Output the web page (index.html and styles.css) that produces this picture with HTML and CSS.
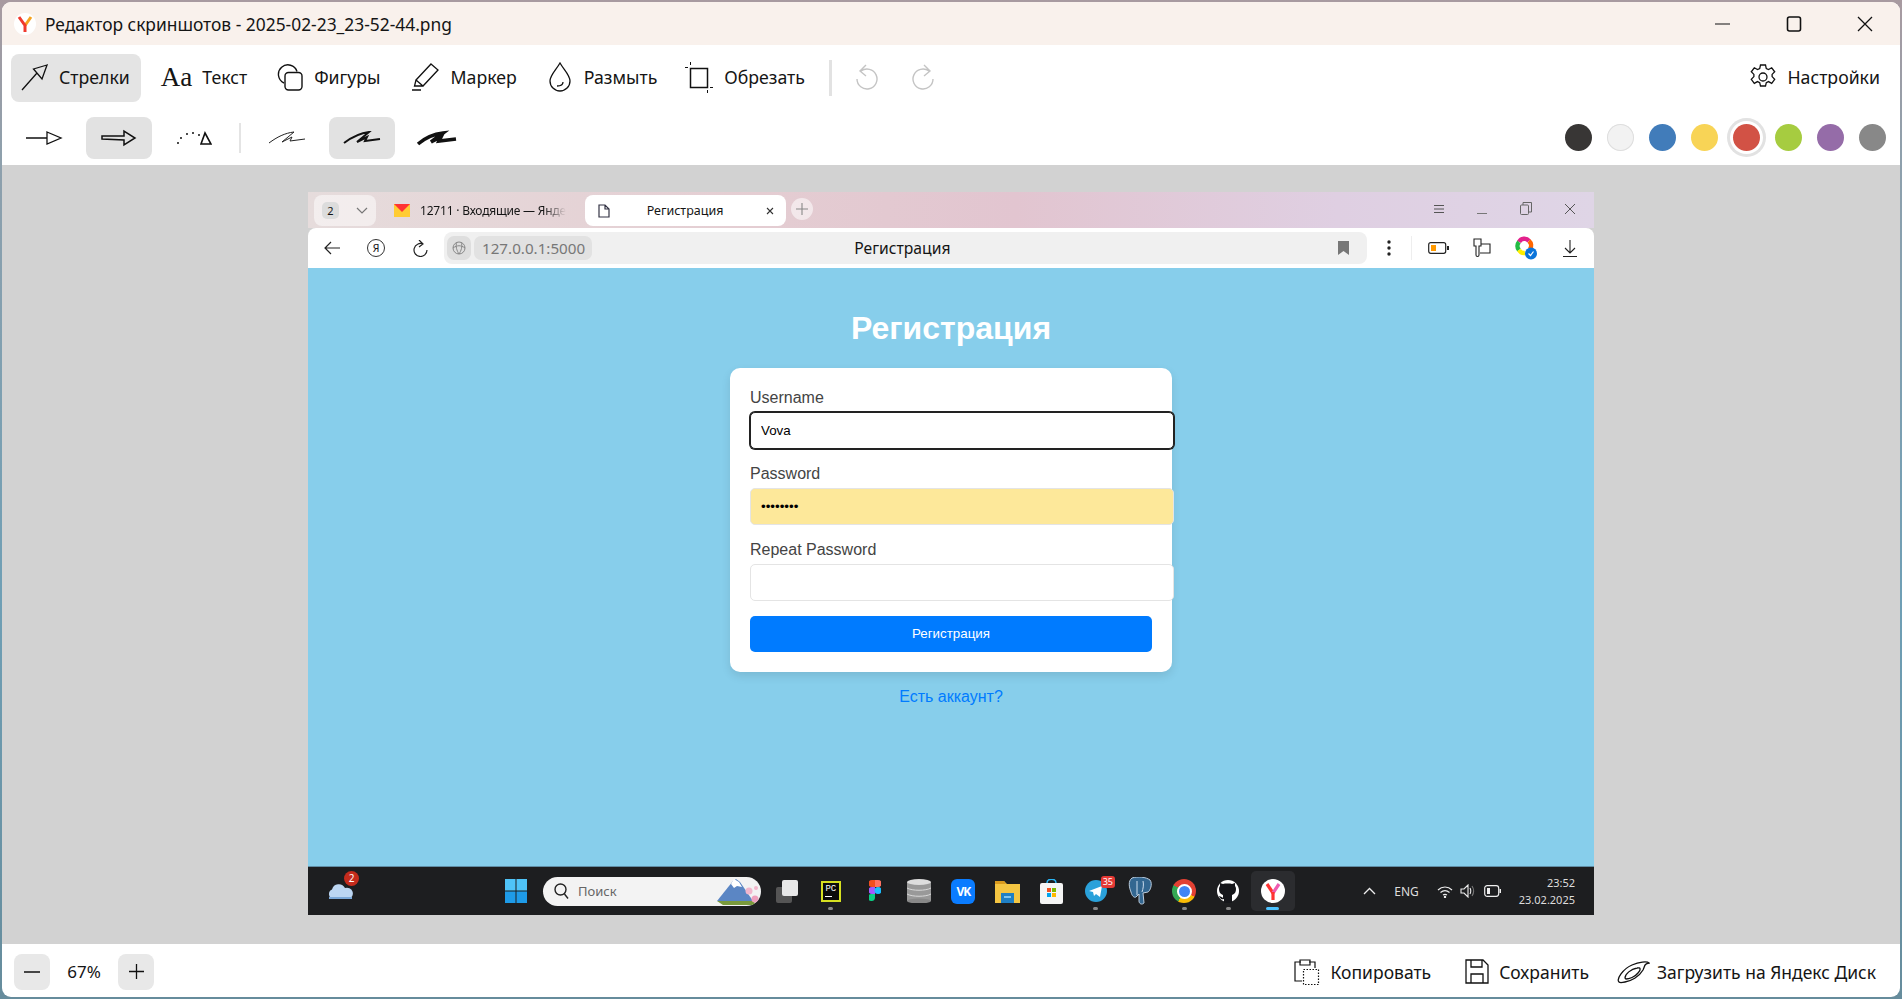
FILE: index.html

```html
<!DOCTYPE html>
<html lang="ru">
<head>
    <meta charset="UTF-8">
    <title>Редактор скриншотов</title>
    <link rel="stylesheet" href="styles.css">
</head>
<body>
<div class="window">

    <div class="titlebar">
        <svg class="logo" width="22" height="22" viewBox="0 0 22 22"><circle cx="11" cy="11" r="11" fill="#fff"/><path d="M17 4l-6 8.500" stroke="#f7a21e" stroke-width="3" fill="none"/><path d="M5 4l6 8.500V19" stroke="#f03a2e" stroke-width="3" fill="none"/></svg>
        <span class="title-text">Редактор скриншотов - 2025-02-23_23-52-44.png</span>
        <div class="win-controls">
            <svg width="16" height="16" viewBox="0 0 16 16"><path d="M0 8h15" stroke="#111" stroke-width="1.2"/></svg>
            <svg width="16" height="16" viewBox="0 0 16 16"><rect x="1.5" y="1" width="13" height="14" rx="2" fill="none" stroke="#111" stroke-width="1.6"/></svg>
            <svg width="16" height="16" viewBox="0 0 16 16"><path d="M1 1l14 14M15 1L1 15" stroke="#111" stroke-width="1.3"/></svg>
        </div>
    </div>

    <div class="toolbar">
        <div class="tool active">
            <svg width="27" height="27" viewBox="0 0 27 27" fill="none" stroke="#111" stroke-width="1.3"><path d="M1 26L16 9M26 1L12.500 5 21 15z"/></svg>
            <span>Стрелки</span>
        </div>
        <div class="tool">
            <span class="aa">Aa</span>
            <span>Текст</span>
        </div>
        <div class="tool">
            <svg width="27" height="27" viewBox="0 0 27 27" fill="none" stroke="#111" stroke-width="1.4"><path d="M7 19A9.500 9.500 0 1 1 20 7.500"/><rect x="8" y="8.500" width="17" height="17.500" rx="3.500"/></svg>
            <span>Фигуры</span>
        </div>
        <div class="tool">
            <svg width="30" height="28" viewBox="0 0 30 28" fill="none" stroke="#111" stroke-width="1.3"><path d="M20 1l7 6-15 16-7-6zM5 17l-1.500 6L12 23M1 27h9"/></svg>
            <span>Маркер</span>
        </div>
        <div class="tool">
            <svg width="27" height="30" viewBox="0 0 27 30" fill="none" stroke="#111" stroke-width="1.3"><path d="M13 1C9 8 3 13 3 19a10 10 0 0 0 20 0C23 13 17 8 13 1z"/><path d="M10 24c3 0 6-1 6-4"/></svg>
            <span>Размыть</span>
        </div>
        <div class="tool crop">
            <svg width="30" height="32" viewBox="0 0 30 32" fill="none" stroke="#111"><rect x="6.500" y="7.500" width="17" height="19" stroke-width="1.500"/><path d="M6.500 1v3M1 6.500h3M23.500 29v3M26 26.500h3"/></svg>
            <span>Обрезать</span>
        </div>
        <div class="vsep"></div>
        <svg class="history" width="23" height="28" viewBox="0 0 23 28" fill="none" stroke="#c4c4c4" stroke-width="1.400"><path d="M6 7a10 10 0 1 1-4 8M11 1L5 7l6 5"/></svg>
        <svg class="history" width="23" height="28" viewBox="0 0 23 28" fill="none" stroke="#c4c4c4" stroke-width="1.400"><path d="M17 7a10 10 0 1 0 4 8M12 1l6 6-6 5"/></svg>
        <div class="tool settings">
            <svg width="28" height="28" viewBox="0 0 28 28" fill="none" stroke="#111" stroke-width="1.300"><circle cx="14" cy="14" r="4"/><path d="M11.500 2h5l.8 3.600 2.200 1 3.200-1.800 3 4-2.600 2.600v2.200l2.600 2.800-3 4-3.200-1.800-2.200 1-.8 3.400h-5l-.8-3.400-2.200-1-3.200 1.800-3-4 2.600-2.800v-2.200L2.300 8.800l3-4 3.200 1.800 2.200-1z"/></svg>
            <span>Настройки</span>
        </div>
    </div>

    <div class="optionbar">
        <div class="opt">
            <svg width="38" height="16" viewBox="0 0 38 16" fill="none" stroke="#111" stroke-width="1.300"><path d="M1 8h21M22 2l14 6-14 6z"/></svg>
        </div>
        <div class="opt selected">
            <svg width="36" height="18" viewBox="0 0 36 18" fill="none" stroke="#111" stroke-width="1.500"><path d="M1 7h22V2l11 7-11 7v-5L1 10z"/></svg>
        </div>
        <div class="opt">
            <svg width="36" height="16" viewBox="0 0 36 16" fill="none" stroke="#111"><path d="M2 13v.1M5 8v.1M11 4v.1M17 3v.1M23 5v.1" stroke-width="2" stroke-linecap="round"/><path d="M29 3l6 11H25z" stroke-width="1.600"/></svg>
        </div>
        <div class="opt-sep"></div>
        <div class="opt">
            <svg width="38" height="14" viewBox="0 0 38 14" fill="none" stroke="#222" stroke-width="1"><path d="M1 12C9 6 17 2 26 1L14 11l10-5-2 4 15-2"/></svg>
        </div>
        <div class="opt selected">
            <svg width="38" height="14" viewBox="0 0 38 14" fill="none" stroke="#111" stroke-width="2"><path d="M1 12C9 6 17 2 26 1L14 11l10-5-2 4 15-2"/></svg>
        </div>
        <div class="opt">
            <svg width="42" height="16" viewBox="0 0 42 16" fill="none" stroke="#111" stroke-width="3.600"><path d="M2 14C9 8 18 4 27 3L15 12l10-5-2 4 17-2"/></svg>
        </div>
        <div class="swatches">
            <span class="swatch c-black"></span>
            <span class="swatch c-white"></span>
            <span class="swatch c-blue"></span>
            <span class="swatch c-yellow"></span>
            <span class="swatch c-red current"></span>
            <span class="swatch c-green"></span>
            <span class="swatch c-purple"></span>
            <span class="swatch c-gray"></span>
        </div>
    </div>

    <div class="canvas">
        <div class="shot">

            <div class="tabstrip">
                <div class="tabgroup">
                    <span class="tabcount">2</span>
                    <svg width="12" height="8" viewBox="0 0 12 8" fill="none" stroke="#777" stroke-width="1.200"><path d="M1 1l5 5 5-5"/></svg>
                </div>
                <div class="tab">
                    <svg width="16" height="13" viewBox="0 0 16 13"><rect width="16" height="13" fill="#fc3"/><path d="M0 0h16L8 8z" fill="#f33"/></svg>
                    <span class="tab-fade">12711 · Входящие — Янде</span>
                </div>
                <div class="tab current">
                    <svg width="12" height="14" viewBox="0 0 12 14" fill="none" stroke="#334" stroke-width="1.200"><path d="M1 1h6l4 4v8H1zM7 1v4h4"/></svg>
                    <span class="tab-title">Регистрация</span>
                    <svg width="8" height="8" viewBox="0 0 8 8" stroke="#333" stroke-width="1.100"><path d="M1 1l6 6M7 1L1 7"/></svg>
                </div>
                <div class="newtab">
                    <svg width="12" height="12" viewBox="0 0 12 12" stroke="#888" stroke-width="1.100"><path d="M6 0v12M0 6h12"/></svg>
                </div>
                <div class="browser-controls">
                    <svg width="10" height="10" viewBox="0 0 10 10" stroke="#555"><path d="M0 1.500h10M0 5h10M0 8.500h10"/></svg>
                    <svg width="10" height="10" viewBox="0 0 10 10" stroke="#777"><path d="M0 9.500h10"/></svg>
                    <svg width="12" height="13" viewBox="0 0 12 13" fill="none" stroke="#666"><rect x=".5" y="3" width="8" height="9.500" rx="1"/><path d="M3 3V.5h8.500V10H9"/></svg>
                    <svg width="10" height="10" viewBox="0 0 10 10" stroke="#555"><path d="M0 0l10 10M10 0L0 10"/></svg>
                </div>
            </div>

            <div class="browserbar">
                <svg class="nav" width="16" height="14" viewBox="0 0 16 14" fill="none" stroke="#222" stroke-width="1.200"><path d="M16 7H1M7 1L1 7l6 6"/></svg>
                <span class="ya-btn">Я</span>
                <svg class="nav" width="16" height="17" viewBox="0 0 16 17" fill="none" stroke="#222" stroke-width="1.200"><path d="M11 4a6.500 6.500 0 1 0 4 6M7 0l4 4-4 3"/></svg>
                <div class="addressbar">
                    <span class="site-icon"><svg width="14" height="14" viewBox="0 0 14 14" fill="none" stroke="#888"><circle cx="7" cy="7" r="6"/><path d="M1 7c4-3 8-3 12 0M5 1c-2 4 0 9 2 12M9 1c2 4 0 9-2 12"/></svg></span>
                    <span class="url">127.0.0.1:5000</span>
                    <span class="page-title">Регистрация</span>
                    <svg width="11" height="14" viewBox="0 0 11 14"><path d="M0 0h11v14L5.500 10 0 14z" fill="#777"/></svg>
                </div>
                <div class="bar-icons">
                    <span class="bar-icon"><svg width="4" height="16" viewBox="0 0 4 16" fill="#222"><circle cx="2" cy="2" r="1.700"/><circle cx="2" cy="8" r="1.700"/><circle cx="2" cy="14" r="1.700"/></svg></span>
                    <span class="bar-sep"></span>
                    <span class="bar-icon"><svg width="21" height="12" viewBox="0 0 21 12"><rect x=".7" y=".7" width="17" height="10.600" rx="2" fill="none" stroke="#222" stroke-width="1.200"/><rect x="3" y="3" width="5" height="6" fill="#f90"/><rect x="19" y="4" width="2" height="4" fill="#222"/></svg></span>
                    <span class="bar-icon"><svg width="18" height="20" viewBox="0 0 18 20" fill="none" stroke="#222" stroke-width="1.100"><path d="M1 1h7v7H6v9c0 2-3 2-3 0V8H1zM8 6h9v9H7"/></svg></span>
                    <span class="bar-icon"><svg width="22" height="24" viewBox="0 0 22 24" fill="none"><path d="M4 6A6 6 0 0 1 14 5" stroke="#e3218c" stroke-width="4.500"/><path d="M14 5a6 6 0 0 1 1 8" stroke="#f60" stroke-width="4.500"/><path d="M4 6a6 6 0 0 0 0 8" stroke="#2b4" stroke-width="4.500"/><path d="M4 14a6 6 0 0 0 6 3" stroke="#fe0" stroke-width="4.500"/><circle cx="16" cy="17.500" r="6" fill="#0a74da"/><path d="M13.500 17.500l2 2 3-4" stroke="#fff" stroke-width="1.200"/></svg></span>
                    <span class="bar-icon"><svg width="14" height="17" viewBox="0 0 14 17" fill="none" stroke="#222" stroke-width="1.100"><path d="M7 0v13M2 8l5 5 5-5M0 16.500h14"/></svg></span>
                </div>
            </div>

            <div class="page">
                <h1>Регистрация</h1>
                <form class="card">
                    <div class="form-group">
                        <label>Username</label>
                        <input class="focused" type="text" value="Vova">
                    </div>
                    <div class="form-group">
                        <label>Password</label>
                        <input class="autofilled" type="password" value="12345678">
                    </div>
                    <div class="form-group">
                        <label>Repeat Password</label>
                        <input type="password">
                    </div>
                    <button class="submit" type="button">Регистрация</button>
                </form>
                <a class="login-link" href="#">Есть аккаунт?</a>
            </div>

            <div class="taskbar">
                <div class="weather">
                    <svg width="26" height="16" viewBox="0 0 26 16"><path d="M5 16a5 5 0 0 1-1-9.500 7 7 0 0 1 13-1.500 5.500 5.500 0 0 1 4 11z" fill="#bcd6f2"/><path d="M1 14h23v2H1z" fill="#7ba8d8"/></svg>
                    <span class="weather-badge">2</span>
                </div>
                <div class="apps">
                    <svg class="start" width="22" height="24" viewBox="0 0 22 24"><path d="M0 0h10.500v11.500H0zM11.500 0H22v11.500H11.500z" fill="#4fc3f7"/><path d="M0 12.500h10.500V24H0zM11.500 12.500H22V24H11.500z" fill="#1e9be8"/></svg>
                    <div class="search">
                        <svg width="15" height="16" viewBox="0 0 15 16" fill="none" stroke="#222" stroke-width="1.400"><circle cx="6.500" cy="6.500" r="5.500"/><path d="M10.500 11l3.500 4.500"/></svg>
                        <span>Поиск</span>
                        <svg class="search-art" width="44" height="28" viewBox="0 0 44 28"><path d="M0 24L16 4l3-2 4 3 13 19z" fill="#5b86c4"/><path d="M14 7l3-5 5 3 3 5-5-1-3 2z" fill="#fff"/><path d="M0 24h36l4 4H6z" fill="#7a9a3c"/><circle cx="32" cy="14" r="3.500" fill="#f2b6cc"/><circle cx="38" cy="22" r="3.500" fill="#ee9fbc"/><circle cx="39" cy="11" r="2" fill="#f2b6cc"/></svg>
                    </div>
                    <div class="app">
                        <svg width="24" height="24" viewBox="0 0 24 24"><rect x="1" y="8" width="16" height="16" rx="2" fill="#555"/><rect x="7" y="1" width="16" height="16" rx="2" fill="#e8e8e8"/></svg>
                    </div>
                    <div class="app running">
                        <span class="pycharm">PC</span>
                    </div>
                    <div class="app">
                        <svg width="12" height="22" viewBox="0 0 12 22"><path d="M3 0h3v7H3a3.500 3.500 0 0 1 0-7z" fill="#f24e1e"/><path d="M6 0h3a3.500 3.500 0 0 1 0 7H6z" fill="#ff7262"/><path d="M3 7h3v7H3a3.500 3.500 0 0 1 0-7z" fill="#a259ff"/><circle cx="9" cy="10.500" r="3.500" fill="#1abcfe"/><path d="M3 14h3v4a3.500 3.500 0 1 1-3-4z" fill="#0acf83"/></svg>
                    </div>
                    <div class="app">
                        <svg width="24" height="24" viewBox="0 0 24 24"><rect y="3" width="24" height="19" fill="#999"/><ellipse cx="12" cy="22" rx="12" ry="2.500" fill="#888"/><ellipse cx="12" cy="3" rx="12" ry="3" fill="#ddd"/><path d="M0 9c5 3 19 3 24 0M0 15c5 3 19 3 24 0" stroke="#d8d8d8" fill="none"/></svg>
                    </div>
                    <div class="app">
                        <span class="vk">VK</span>
                    </div>
                    <div class="app">
                        <svg width="25" height="24" viewBox="0 0 25 24"><path d="M0 2h9l3 3h13v19H0z" fill="#f4c542"/><path d="M0 2h9l2 3H0z" fill="#d99a1e"/><rect x="6" y="14" width="13" height="10" fill="#1f7fc4"/><rect x="9" y="17" width="7" height="2" fill="#7ec4f0"/></svg>
                    </div>
                    <div class="app">
                        <svg width="23" height="25" viewBox="0 0 23 25"><path d="M7 4c0-5 9-5 9 0" fill="none" stroke="#29b6f6" stroke-width="1.500"/><rect y="4" width="23" height="21" rx="2" fill="#f5f5f5"/><path d="M7 9h4v4H7z" fill="#f25022"/><path d="M12 9h4v4h-4z" fill="#7fba00"/><path d="M7 14h4v4H7z" fill="#00a4ef"/><path d="M12 14h4v4h-4z" fill="#ffb900"/></svg>
                    </div>
                    <div class="app running">
                        <svg width="22" height="22" viewBox="0 0 22 22"><circle cx="11" cy="11" r="11" fill="#2aa1da"/><path d="M4 11l13-5-2 11-4-3-2 2-1-4z" fill="#fff"/></svg>
                        <span class="app-badge">35</span>
                    </div>
                    <div class="app">
                        <svg width="24" height="28" viewBox="0 0 24 28"><path d="M4 1c6-2 14-1 18 2 3 4 0 11-2 12l-5 1 1 10c-2 2-5 1-5-2v-7l-3 3c-2 1-4-1-5-5C1 10 0 4 4 1z" fill="#336791" stroke="#bcd" stroke-width="1"/><path d="M9 4v14M15 4c1 4 0 8-1 11" stroke="#cde" fill="none"/></svg>
                    </div>
                    <div class="app running">
                        <span class="chrome"><span class="chrome-eye"></span></span>
                    </div>
                    <div class="app running">
                        <svg width="22" height="24" viewBox="0 0 22 24"><circle cx="11" cy="12" r="11" fill="#fff"/><path d="M7 24v-4c-3 1-4-1-5-3 1 0 3 1 4 2v-3c-3-1-4-3-4-6 0-2 1-3 1-3V4l3 1c2-.6 7-.6 9 0l3-1v3s1 1 1 3c0 3-1 5-4 6v8z" fill="#15161a"/></svg>
                    </div>
                    <div class="app selected">
                        <svg width="24" height="24" viewBox="0 0 24 24"><circle cx="12" cy="12" r="12" fill="#fff"/><path d="M6 5l6 9" stroke="#f33" stroke-width="3.200"/><path d="M18 5l-6 9" stroke="#ee5bb0" stroke-width="3.200"/><path d="M12 13v8" stroke="#f33" stroke-width="3.200"/></svg>
                    </div>
                </div>
                <div class="tray">
                    <svg width="13" height="8" viewBox="0 0 13 8" fill="none" stroke="#eee" stroke-width="1.300"><path d="M1 7l5.500-5.500L12 7"/></svg>
                    <span class="lang">ENG</span>
                    <div class="tray-icons">
                        <svg width="16" height="13" viewBox="0 0 16 13" fill="none" stroke="#eee" stroke-width="1.200"><path d="M1 5c4-4 10-4 14 0M3.500 7.500c3-2.500 6-2.500 9 0M6 10c1.500-1 2.500-1 4 0"/><circle cx="8" cy="12" r=".6"/></svg>
                        <svg width="16" height="14" viewBox="0 0 16 14" fill="none" stroke="#eee" stroke-width="1.100"><path d="M1 5h3l4-4v12L4 9H1zM10 4c1 2 1 4 0 6"/><path d="M12 2c2 3 2 7 0 10" stroke="#777"/></svg>
                        <svg width="17" height="12" viewBox="0 0 17 12"><rect x=".7" y=".7" width="14" height="10.600" rx="2.500" fill="none" stroke="#eee" stroke-width="1.200"/><rect x="3" y="3" width="3" height="6" fill="#eee"/><rect x="15.500" y="4" width="1.500" height="4" fill="#eee"/></svg>
                    </div>
                    <div class="clock">
                        <span>23:52</span>
                        <span>23.02.2025</span>
                    </div>
                </div>
            </div>

        </div>
    </div>

    <div class="statusbar">
        <button class="zoom-btn" type="button"><svg width="16" height="16" viewBox="0 0 16 16" stroke="#111" stroke-width="1.300"><path d="M0 8h16"/></svg></button>
        <span class="zoom-value">67%</span>
        <button class="zoom-btn" type="button"><svg width="15" height="15" viewBox="0 0 15 15" stroke="#111" stroke-width="1.300"><path d="M0 7.500h15M7.500 0v15"/></svg></button>
        <div class="actions">
            <div class="action">
                <svg width="28" height="28" viewBox="0 0 28 28" fill="none" stroke="#111" stroke-width="1.200"><path d="M8 4H2v19h7M16 4h6v6M7 2h10v5H7z"/><rect x="10.500" y="11.500" width="15" height="15" stroke-dasharray="1.500 1.500"/></svg>
                <span>Копировать</span>
            </div>
            <div class="action save">
                <svg width="24" height="25" viewBox="0 0 24 25" fill="none" stroke="#111" stroke-width="1.300"><path d="M1 1h17l5 5v18H1zM6 1v7h11V1M6 24v-9h12v9"/></svg>
                <span>Сохранить</span>
            </div>
            <div class="action disk">
                <svg width="33" height="24" viewBox="0 0 33 24" fill="none" stroke="#111" stroke-width="1.300"><path d="M2 22c-3-3 4-13 13-17 7-3 15-4 17-2-5 1-4 3-6 7-4 7-12 11-18 12-2 .4-5 1-6 0z"/><path d="M8 18c0-4 6-9 12-10 4-1 4 2 1 5-3 4-9 6-12 6z"/></svg>
                <span>Загрузить на Яндекс Диск</span>
            </div>
        </div>
    </div>

</div>
</body>
</html>
```

FILE: styles.css

```css
* {
    box-sizing: content-box;
}
html, body {
    height: 100%;
}
body {
    margin: 0;
    overflow: hidden;
    background: linear-gradient(180deg, #a89aa0 0%, #8fa0ac 15%, #6f9fb5 60%, #668c9c 100%);
    font-family: "Noto Sans", "Open Sans", sans-serif;
    color: #151515;
}
svg {
    display: block;
    flex: none;
}
.window {
    position: relative;
    margin: 2px;
    height: 995px;
    display: flex;
    flex-direction: column;
    border-radius: 9px;
    overflow: hidden;
    background: #fff;
}

/* title bar */
.titlebar {
    height: 43px;
    flex: none;
    display: flex;
    align-items: center;
    padding-left: 12px;
    background: #f9f1ec;
}
.title-text {
    margin-left: 9px;
    font-size: 17.400px;
}
.win-controls {
    margin-left: auto;
    display: flex;
    align-items: center;
    gap: 55px;
    padding-right: 27px;
}

/* main toolbar */
.toolbar {
    height: 63px;
    flex: none;
    display: flex;
    align-items: flex-start;
    padding: 9px 0 0 9px;
    gap: 10px;
    font-size: 17.700px;
}
.tool {
    height: 46px;
    padding: 0 10px 2px;
    display: flex;
    align-items: center;
    gap: 10px;
    border-radius: 8px;
}
.tool.active {
    background: #e4e4e4;
    gap: 11px;
    padding-right: 11px;
}
.tool.crop {
    margin-left: -3px;
}
.aa {
    font-family: "Liberation Serif", serif;
    font-size: 27px;
    line-height: 1;
}
.vsep {
    width: 3px;
    height: 36px;
    margin: 6px 13px 0 4px;
    background: #e2e2e2;
}
.history {
    margin-top: 10px;
    margin-right: 24px;
}
.settings {
    margin-left: auto;
    padding-right: 20px;
}

/* second row, arrow type and colour */
.optionbar {
    height: 48px;
    flex: none;
    display: flex;
    align-items: flex-start;
    gap: 9px;
    padding-left: 9px;
}
.opt {
    width: 66px;
    height: 42px;
    display: flex;
    align-items: center;
    justify-content: center;
    border-radius: 8px;
}
.opt.selected {
    background: #e2e2e2;
}
.opt-sep {
    width: 2px;
    height: 30px;
    margin: 6px 4px 0 3px;
    background: #e4e4e4;
}
.swatches {
    margin-left: auto;
    padding-right: 7px;
    display: flex;
    height: 40px;
    align-items: center;
}
.swatch {
    position: relative;
    width: 27px;
    height: 27px;
    margin: 0 7.500px;
    border-radius: 50%;
}
.swatch.current {
    box-shadow: 0 0 0 3px #fff, 0 0 0 6px #e2e2e2;
}
.c-black { background: #383635; }
.c-white { background: #f2f2f2; box-shadow: inset 0 0 0 1px #dedede; }
.c-blue { background: #417cba; }
.c-yellow { background: #f8d456; }
.c-red { background: #d25245; }
.c-green { background: #a6cc40; }
.c-purple { background: #956ca8; }
.c-gray { background: #888888; }

/* canvas with the picture */
.canvas {
    flex: 1;
    display: flex;
    justify-content: center;
    align-items: flex-start;
    padding-top: 27px;
    background: #d2d2d2;
}
.shot {
    width: 1286px;
    height: 723px;
    display: flex;
    flex-direction: column;
    font-family: "Noto Sans", sans-serif;
}
.tabstrip {
    height: 36px;
    flex: none;
    display: flex;
    align-items: flex-start;
    padding: 3px 0 0 6px;
    box-sizing: border-box;
    background: linear-gradient(90deg, #e6dcdc 0%, #e4cdd2 35%, #e2c5d0 55%, #dfcfe2 80%, #dfd5e6 100%);
    font-size: 12.500px;
}
.tabgroup {
    width: 62px;
    height: 31px;
    display: flex;
    align-items: center;
    gap: 17px;
    padding-left: 8px;
    box-sizing: border-box;
    border-radius: 8px;
    background: rgba(255, 255, 255, 0.5);
}
.tabcount {
    width: 17px;
    height: 17px;
    line-height: 17px;
    text-align: center;
    border-radius: 5px;
    background: #dcdcdc;
    font-size: 11px;
}
.tab {
    width: 207px;
    height: 31px;
    box-sizing: border-box;
    display: flex;
    align-items: center;
    gap: 10px;
    padding-left: 18px;
    white-space: nowrap;
}
.tab-fade {
    font-size: 12px;
    letter-spacing: -0.2px;
    -webkit-mask-image: linear-gradient(90deg, #000 85%, transparent 100%);
    mask-image: linear-gradient(90deg, #000 85%, transparent 100%);
}
.tab.current {
    width: 201px;
    margin-left: 2px;
    background: #fff;
    border-radius: 8px;
    padding: 0 12px 0 13px;
}
.tab-title {
    flex: 1;
    text-align: center;
    padding-right: 6px;
}
.newtab {
    width: 22px;
    height: 22px;
    margin: 3px 0 0 5px;
    border-radius: 50%;
    background: rgba(255, 255, 255, 0.55);
    display: flex;
    align-items: center;
    justify-content: center;
}
.browser-controls {
    margin: 7px 0 0 auto;
    display: flex;
    align-items: center;
    gap: 33px;
    padding-right: 19px;
}
.browserbar {
    height: 40px;
    flex: none;
    display: flex;
    align-items: center;
    padding-left: 16px;
    background: #fff;
    border-radius: 8px 8px 0 0;
}
.ya-btn {
    width: 16px;
    height: 16px;
    margin-left: 27px;
    border: 1px solid #333;
    border-radius: 50%;
    text-align: center;
    font-size: 10.500px;
    line-height: 16px;
}
.browserbar .nav:nth-of-type(2) {
    margin-left: 27px;
}
.addressbar {
    width: 923px;
    height: 32px;
    margin-left: 16px;
    display: flex;
    align-items: center;
    padding: 0 18px 0 3px;
    box-sizing: border-box;
    border-radius: 8px;
    background: #f0f0f0;
}
.site-icon {
    width: 24px;
    height: 24px;
    display: flex;
    align-items: center;
    justify-content: center;
    border-radius: 7px;
    background: #dedede;
}
.url {
    margin-left: 3px;
    padding: 0 7px 0 8px;
    height: 24px;
    line-height: 24px;
    border-radius: 7px;
    background: #e2e2e2;
    color: #777;
    font-size: 15.200px;
}
.page-title {
    margin-left: 262px;
    font-size: 15.700px;
    margin-right: auto;
}
.bar-icons {
    display: flex;
    align-items: center;
}
.bar-icon {
    width: 44px;
    display: flex;
    justify-content: center;
}
.bar-sep {
    width: 1px;
    height: 24px;
    margin-right: 4px;
    background: #eee;
}

/* registration page inside the picture */
.page {
    flex: 1;
    display: flex;
    flex-direction: column;
    align-items: center;
    background: #87ceeb;
    font-family: "Liberation Sans", Arial, sans-serif;
    box-shadow: inset 0 -1px 0 #5f8da5;
}
.page h1 {
    margin: 41px 0 21px;
    font-size: 32px;
    line-height: 38px;
    color: #fff;
}
.card {
    width: 402px;
    padding: 20px;
    background: #fff;
    border-radius: 10px;
    box-shadow: 0 4px 10px rgba(0, 0, 0, 0.1);
}
.form-group {
    margin-bottom: 15px;
}
.form-group label {
    display: block;
    margin-bottom: 5px;
    font-size: 16px;
    line-height: 19px;
    color: #444;
}
.form-group input {
    display: block;
    width: 100%;
    height: 15px;
    padding: 10px;
    border: 1px solid #e4e4e4;
    border-radius: 5px;
    background: #fff;
    font-family: "Liberation Sans", Arial, sans-serif;
    font-size: 13.333px;
    color: #000;
    outline: none;
}
.form-group input.focused {
    border-color: #222;
    box-shadow: 0 0 0 1px #222;
}
.form-group input.autofilled {
    background: #fde89a;
}
.submit {
    display: block;
    width: 100%;
    height: 34px;
    padding: 0 0 2px;
    border: none;
    border-radius: 5px;
    background: #007bff;
    color: #fff;
    font-family: "Liberation Sans", Arial, sans-serif;
    font-size: 13.333px;
}
.login-link {
    margin-top: 16px;
    font-size: 16px;
    color: #007bff;
    text-decoration: none;
}

/* windows taskbar inside the picture */
.taskbar {
    height: 48px;
    flex: none;
    display: flex;
    align-items: center;
    background: #1d1e20;
    color: #e8e8e8;
}
.weather {
    position: relative;
    margin-left: 20px;
    width: 26px;
}
.weather-badge {
    position: absolute;
    top: -12px;
    right: -5px;
    width: 15px;
    height: 15px;
    line-height: 15px;
    text-align: center;
    border-radius: 50%;
    background: #c42b1c;
    color: #fff;
    font-size: 10px;
}
.apps {
    margin-left: 151px;
    display: flex;
    align-items: center;
}
.search {
    width: 218px;
    height: 29px;
    margin-left: 16px;
    display: flex;
    align-items: center;
    gap: 9px;
    padding-left: 11px;
    box-sizing: border-box;
    border-radius: 15px;
    background: #f3f3f3;
    color: #666;
    font-size: 13px;
    overflow: hidden;
}
.search-art {
    margin-left: auto;
}
.app {
    position: relative;
    width: 44.200px;
    height: 48px;
    display: flex;
    align-items: center;
    justify-content: center;
}
.search + .app {
    margin-left: 3.500px;
}
.app.running::after,
.app.selected::after {
    content: "";
    position: absolute;
    bottom: 5px;
    left: 50%;
    width: 5px;
    height: 3px;
    margin-left: -2.500px;
    border-radius: 2px;
    background: #888;
}
.app.selected {
    background: #2b2c2f;
    border-radius: 5px;
    height: 40px;
}
.app.selected::after {
    bottom: 1px;
    width: 13px;
    margin-left: -6.500px;
    background: #4cc2ff;
}
.app-badge {
    position: absolute;
    top: 9px;
    right: 3px;
    padding: 0 2px;
    border-radius: 3px;
    background: #e53935;
    color: #fff;
    font-size: 9px;
    line-height: 12px;
}
.pycharm {
    width: 16px;
    height: 17px;
    line-height: 12px;
    text-align: center;
    border: 2px solid #d6e021;
    background: #0b0b0b;
    color: #fff;
    font-size: 9px;
    font-family: "Liberation Mono", monospace;
}
.pycharm::after {
    content: "";
    display: block;
    width: 7px;
    height: 1.500px;
    margin: 1px 0 0 2px;
    background: #fff;
}
.vk {
    width: 24px;
    height: 25px;
    border-radius: 6px;
    background: #0a7cff;
    color: #fff;
    text-align: center;
    line-height: 25px;
    font-size: 12px;
    font-weight: 700;
    letter-spacing: -1px;
}
.chrome {
    width: 24px;
    height: 24px;
    display: flex;
    align-items: center;
    justify-content: center;
    border-radius: 50%;
    background: conic-gradient(#e34133 0 33%, #fbbc05 33% 58%, #34a853 58% 83%, #e34133 83%);
}
.chrome-eye {
    width: 11px;
    height: 11px;
    border: 2px solid #fff;
    border-radius: 50%;
    background: #4285f4;
}
.tray {
    margin-left: auto;
    padding-right: 19px;
    display: flex;
    align-items: center;
    gap: 18px;
    font-size: 12px;
}
.lang {
    font-size: 12px;
    color: #ddd;
}
.tray-icons {
    display: flex;
    align-items: center;
    gap: 7.500px;
}
.clock {
    display: flex;
    flex-direction: column;
    align-items: flex-end;
    font-size: 11px;
    line-height: 17px;
    color: #ddd;
}

/* bottom bar */
.statusbar {
    height: 51px;
    flex: none;
    display: flex;
    align-items: center;
    padding: 2px 0 0 12px;
    font-size: 17.500px;
}
.zoom-btn {
    width: 36px;
    height: 36px;
    padding: 0;
    border: none;
    border-radius: 8px;
    background: #e8e8e8;
    display: flex;
    align-items: center;
    justify-content: center;
}
.zoom-value {
    width: 68px;
    text-align: center;
    font-size: 17px;
}
.actions {
    margin-left: auto;
    padding-right: 24px;
    display: flex;
    align-items: center;
    gap: 28px;
}
.action {
    display: flex;
    align-items: center;
    gap: 10px;
}
.action.save {
    margin-left: 6px;
}
.action.disk {
    gap: 7px;
}
```
